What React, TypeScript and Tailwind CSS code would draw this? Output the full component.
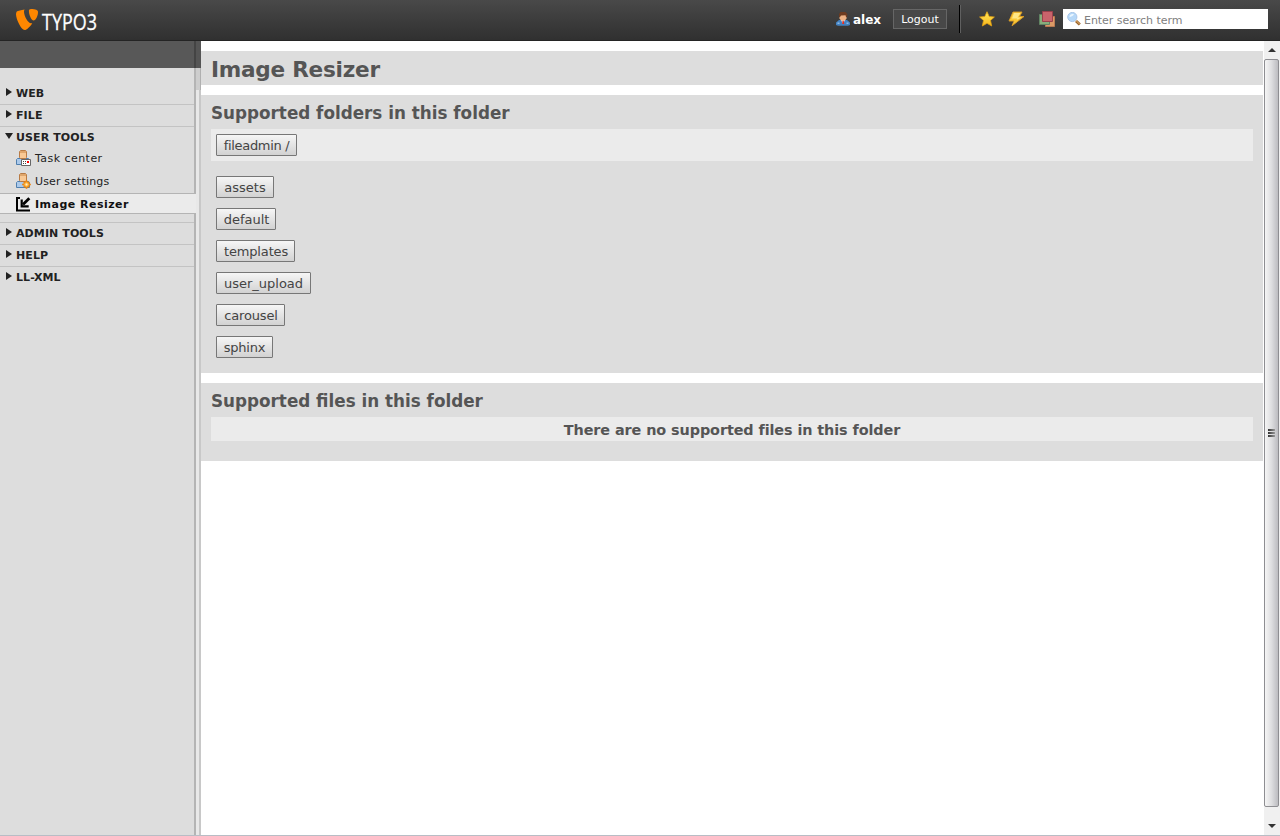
import type { ReactNode } from "react";

function Logo() {
  return (
    <svg width="120" height="36" viewBox="0 -6 120 36" className="block">
      <path
        d="M9.600 .4C6 .9 3 1.600 1.800 2.500C1.300 3.200 1 4.200 1 5.300C1 10 6 21 9.700 21C11.600 21 14.800 18 17.300 14.200C16.900 14.300 16.600 14.300 16.200 14.300C12.900 14.300 9 6.600 9 2.700C9 1.600 9.200 .9 9.600 .4Z"
        fill="#ff8700"
      />
      <path
        d="M16 0C14.700 .1 13.900 .5 13.900 1.700C13.900 5.600 16.200 11.500 18.600 11.500C20.700 11.500 23 6.500 23 3.200C23 .8 20.600 0 16 0Z"
        fill="#ff8700"
      />
      <text x="27" y="21" fontSize="22" fill="#fff" stroke="#fff" strokeWidth=".3" fontFamily="'Open Sans', sans-serif" textLength="55" lengthAdjust="spacingAndGlyphs">
        TYPO3
      </text>
    </svg>
  );
}

function UserIcon() {
  return (
    <svg width="14" height="14" viewBox="0 0 14 14">
      <path d="M0 13V10.500L3 8h8l3 2.500V13l-2 .7H2z" fill="#4382c2" />
      <path d="M1.500 10.500h2V12h-2zm9 0h2V12h-2z" fill="#8bb8e4" />
      <path d="M5 8h4l-2 4z" fill="#e9eef5" />
      <path d="M6.500 8.500h1.200l.5 3.500h-2z" fill="#e02c20" />
      <path d="M3.500 3h7v3.500L9 8.500H5L3.500 6.500z" fill="#edb184" />
      <path d="M3 5V2l1.500-2h5L11.200 2v3H10L9.500 3.300 5 3.500 4 5z" fill="#6d3b20" />
    </svg>
  );
}

function StarIcon() {
  return (
    <svg width="16" height="16" viewBox="0 0 16 16">
      <defs>
        <linearGradient id="star" x2="0" y2="1">
          <stop stopColor="#ffe95e" />
          <stop offset="1" stopColor="#f7b61a" />
        </linearGradient>
      </defs>
      <path d="M8 .7l2.200 4.800 5.200.5-3.900 3.500 1.200 5.500L8 12.300 3.300 15l1.200-5.500L.6 6l5.200-.5z" fill="url(#star)" stroke="#dfa013" strokeWidth=".8" />
    </svg>
  );
}

function BoltIcon() {
  return (
    <svg width="17" height="16" viewBox="0 0 17 16">
      <path d="M5 1h9l-2.500 4.500h4.500L4 14.800 6 10H1z" fill="#fbc936" stroke="#d99b27" strokeWidth=".9" />
      <path d="M6 2h6.500L9.500 6.500h3.800L8.500 9l.8-1.500H4z" fill="#ffe787" />
    </svg>
  );
}

function LayersIcon() {
  return (
    <svg width="17" height="17" viewBox="0 0 17 17">
      <path d="M6.500 5.500h9v10h-9z" fill="#dc9a66" stroke="#b87b54" />
      <path d="M.5 3.500h10v10H.5z" fill="#87ad7b" stroke="#618363" />
      <path d="M3.500.5h10v10h-10z" fill="#c9646b" stroke="#9b414c" />
    </svg>
  );
}

function SearchIcon() {
  return (
    <svg width="14" height="14" viewBox="0 0 14 14">
      <path d="M9 9l3.800 3.500" stroke="#9c652b" strokeWidth="3" />
      <path d="M9 8.500l3.500 3.500" stroke="#e7b574" strokeWidth="1" />
      <circle cx="5.300" cy="5" r="4.600" fill="#b6d8f8" stroke="#a9c6e8" />
      <path d="M2.500 5C2.500 2 5 1.500 7 2.200 6 4 4 5 2.500 5z" fill="#eaf6ff" />
    </svg>
  );
}

function PersonIcon({ kind }: { kind: "task" | "settings" }) {
  return (
    <svg width="16" height="16" viewBox="0 0 16 16" className="block">
      <path d="M.5 14.500V9.500l1-1h11l1 1v5z" fill="#abc9ea" stroke="#507fae" />
      <path d="M3.500 1.500l1-1h5l1 1v6l-1 1h-5l-1-1z" fill="#f9c995" stroke="#b87b45" />
      <path d="M4 1h6v2H4z" fill="#dfa66c" />
      {kind === "task" ? (
        <>
          <path d="M5.500 9.500h9v6h-9z" fill="#fff" stroke="#666" />
          <path d="M7 11h1v1H7zm2 0h1v1H9zM7 13h1v1H7zm2 0h1v1H9z" fill="#444" />
          <path d="M11 11h2v2h-2z" fill="#f00" />
        </>
      ) : (
        <>
          <path d="M10.500 7.200v8.600M6.200 11.500h8.600M7.800 8.800l5.400 5.400m0-5.400l-5.400 5.400" stroke="#ef7d00" strokeWidth="1.600" />
          <circle cx="10.500" cy="11.500" r="2.700" fill="#ffbb50" stroke="#f18a0b" />
          <circle cx="10.500" cy="11.500" r="1" fill="#fff0c8" />
        </>
      )}
    </svg>
  );
}

function ResizeIcon() {
  return (
    <svg width="15" height="15" viewBox="0 0 15 15" className="block">
      <path d="M4 1H1v12.500h13" fill="none" stroke="#000" strokeWidth="2" />
      <path d="M13.300 1.200L7 7.500" stroke="#000" strokeWidth="2.800" />
      <path d="M5.700 2.500v6.800h7" fill="none" stroke="#000" strokeWidth="2.200" />
    </svg>
  );
}

function Group({ label, open = false, last = false }: { label: string; open?: boolean; last?: boolean }) {
  return (
    <div
      className={
        "flex h-[22px] w-[194px] items-start border-b pl-[5px] text-[11px] leading-4 font-bold text-[#222] " +
        (open || last ? "border-transparent" : "border-[#c3c3c3]")
      }
    >
      <svg width="8" height="8" viewBox="0 0 8 8" className="mt-[5px] mr-[3px] shrink-0">
        <path d={open ? "M0 1h8L4 7z" : "M1 0v8l6-4z"} fill="#222" />
      </svg>
      <span className="mt-[3px] whitespace-nowrap tracking-[0.1px]">{label}</span>
    </div>
  );
}

function Item({ label, icon, tracking }: { label: string; icon: ReactNode; tracking: string }) {
  return (
    <div className="flex h-[23px] items-start pl-4 text-[11px] leading-4 text-[#222]">
      <span className="mt-[5px] mr-[3px] shrink-0">{icon}</span>
      <span className={"mt-[6px] " + tracking}>{label}</span>
    </div>
  );
}

function Sidebar() {
  return (
    <aside className="flex w-[201px] shrink-0 bg-[#ddd]">
      <div className="flex w-[196px] shrink-0 flex-col">
        <div className="h-[27px] border-r-2 border-[#444] bg-[#585858]" />
        <div className="h-[125px] border-r-2 border-[#b4b4b4] pt-[15px]">
          <Group label="WEB" />
          <Group label="FILE" />
          <Group label="USER TOOLS" open />
          <div className="-mt-1">
            <Item label="Task center" icon={<PersonIcon kind="task" />} tracking="tracking-[0.45px]" />
            <Item label="User settings" icon={<PersonIcon kind="settings" />} tracking="tracking-[0.15px]" />
          </div>
        </div>
        <div className="flex h-[21px] shrink-0 items-start border-y border-[#b4b4b4] bg-[#ebebeb] pt-[3px] pl-4 text-[11px] leading-4 font-bold text-[#111]">
          <ResizeIcon />
          <span className="ml-1 tracking-[0.48px]">Image Resizer</span>
        </div>
        <div className="flex-1 border-r-2 border-[#b4b4b4]">
          <div className="h-[9px] w-[194px] border-b border-[#c3c3c3]" />
          <Group label="ADMIN TOOLS" />
          <Group label="HELP" />
          <Group label="LL-XML" last />
        </div>
      </div>
      <div className="flex w-[5px] flex-col">
        <div className="h-[27px] bg-[#555]" />
        <div className="h-[22px] border-r border-[#b0b0b0] bg-[#cdcdcd]" />
        <div className="flex-1 border-r-2 border-[#c8c8c8] bg-[#e8e8e8]" />
      </div>
    </aside>
  );
}

function FolderButton({ label, width }: { label: string; width: string }) {
  return (
    <button
      className={
        "flex h-[22px] items-start justify-center rounded-[1px] border border-[#777] bg-linear-to-b from-[#f6f6f6] to-[#d2d2d2] pt-px text-[13px] leading-5 font-normal whitespace-nowrap text-[#444] " +
        width
      }
    >
      {label}
    </button>
  );
}

const folders = [
  { label: "assets", width: "w-[58px]" },
  { label: "default", width: "w-[60px] pl-px" },
  { label: "templates", width: "w-[79px] tracking-[-0.15px] pl-px" },
  { label: "user_upload", width: "w-[95px]" },
  { label: "carousel", width: "w-[69px] tracking-[-0.15px] pl-px" },
  { label: "sphinx", width: "w-[57px] tracking-[-0.2px]" },
];

function Scrollbar() {
  return (
    <div className="ml-px flex w-4 shrink-0 flex-col bg-[#f0f0f0]">
      <div className="flex h-[18px] items-center justify-center">
        <svg width="8" height="4" viewBox="0 0 8 4">
          <path d="M0 4l4-4 4 4z" fill="#333" />
        </svg>
      </div>
      <div className="flex h-[748px] w-[15px] flex-col items-center justify-center gap-px rounded-[2px] border border-[#8e8e92] bg-linear-to-r from-[#f5f5f5] via-[#dedee0] to-[#bcbcc0]">
        <div className="h-[2px] w-[7px] bg-linear-to-r from-[#333] to-[#999]" />
        <div className="h-[2px] w-[7px] bg-linear-to-r from-[#333] to-[#999]" />
        <div className="h-[2px] w-[7px] bg-linear-to-r from-[#333] to-[#999]" />
      </div>
      <div className="flex flex-1 items-center justify-center pt-[10px]">
        <svg width="8" height="4" viewBox="0 0 8 4">
          <path d="M0 0l4 4 4-4z" fill="#333" />
        </svg>
      </div>
    </div>
  );
}

export default function App() {
  return (
    <div className="flex h-[836px] w-[1280px] flex-col overflow-hidden border-b border-[#b8bdc5] bg-white font-['Verdana','DejaVu_Sans',sans-serif]">
      <header className="flex h-[41px] shrink-0 border-b border-[#242424] bg-linear-to-b from-[#494949] to-[#303030] pr-3 pl-[15px]">
        <div className="pt-[3px]">
          <Logo />
        </div>
        <div className="ml-auto flex">
          <div className="mt-3">
            <UserIcon />
          </div>
          <span className="mt-3 ml-[3px] w-[40px] text-[12px] leading-4 font-bold text-white">alex</span>
          <button className="mt-[9px] h-5 w-[54px] border border-[#666] bg-[#484848] pt-px text-[11px] leading-4 text-white">Logout</button>
          <div className="mt-[5px] ml-[12px] h-7 w-[2px] border-r border-[#606060] bg-black" />
          <div className="mt-[11px] ml-[18px]">
            <StarIcon />
          </div>
          <div className="mt-[11px] ml-[13px]">
            <BoltIcon />
          </div>
          <div className="mt-[11px] ml-[14px]">
            <LayersIcon />
          </div>
          <div className="mt-[9px] ml-[7px] flex h-5 w-[205px] bg-white pt-[3px] pl-1">
            <SearchIcon />
            <span className="mt-px ml-[3px] text-[11px] leading-4 tracking-[-0.05px] text-[#808080]">Enter search term</span>
          </div>
        </div>
      </header>
      <div className="flex min-h-0 flex-1">
        <Sidebar />
        <main className="flex-1 pt-[10px] font-bold text-[#555]">
          <h1 className="h-[34px] bg-[#ddd] pl-[10px] text-[21.6px] leading-[37px] tracking-[-0.25px]">Image Resizer</h1>
          <section className="mt-[10px] h-[278px] bg-[#ddd] px-[10px]">
            <h2 className="h-[34px] text-[16.8px] leading-[36px]">Supported folders in this folder</h2>
            <div className="h-8 bg-[#ebebeb] p-[5px]">
              <FolderButton label="fileadmin /" width="w-[81px] tracking-[-0.3px]" />
            </div>
            <div className="mt-[15px] flex flex-col gap-[10px] pl-[5px]">
              {folders.map((f) => (
                <FolderButton key={f.label} {...f} />
              ))}
            </div>
          </section>
          <section className="mt-[10px] h-[78px] bg-[#ddd] px-[10px]">
            <h2 className="h-[34px] text-[16.8px] leading-[36px]">Supported files in this folder</h2>
            <p className="h-6 bg-[#ebebeb] text-center text-[14.4px] leading-[26px] tracking-[-0.09px]">There are no supported files in this folder</p>
          </section>
        </main>
        <Scrollbar />
      </div>
    </div>
  );
}
